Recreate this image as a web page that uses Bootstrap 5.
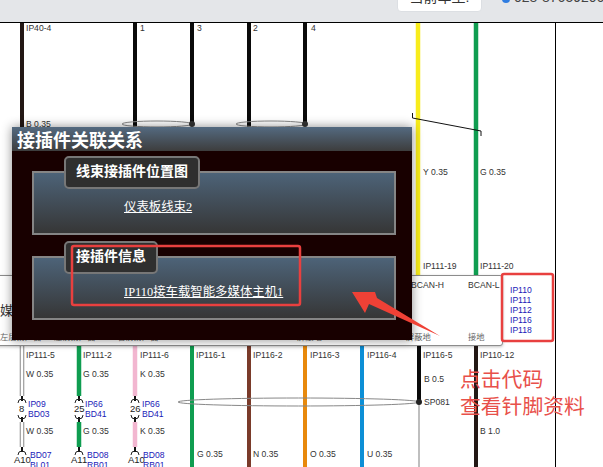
<!DOCTYPE html>
<html lang="zh-CN">
<head>
  <meta charset="UTF-8" />
  <meta name="viewport" content="width=device-width, initial-scale=1.0"/>
  <title>接插件关联关系</title>
  <link href="https://cdn.jsdelivr.net/npm/bootstrap@5.3.2/dist/css/bootstrap.min.css" rel="stylesheet" />
  <style>
    html, body { height: 467px; overflow: hidden; }
    body { background-color: #fff; font-family: "Liberation Sans", "Noto Sans CJK SC", sans-serif; }
    .topbar { height: 23px; background-color: #e4e6e9; border-bottom: 1px solid #000; }
    .car-btn { width: 85px; height: 24px; margin-right: 20px; margin-bottom: 10px; background: #fff; border: 1px solid #dcdfe3; border-radius: 4px; font-size: 14px; line-height: 16px; color: #333; text-align: center; }
    .phone { width: 101px; height: 18px; margin-bottom: 16px; font-size: 14px; line-height: 18px; color: #444; white-space: nowrap; }
    .phone-dot { flex: none; width: 8px; height: 8px; border-radius: 50%; background: #2f7de1; margin-right: 4px; margin-top: 4px; }
    .canvas { position: relative; height: 444px; overflow: hidden; }
    .diagram, .notes { position: absolute; left: 0; top: 0; }
    .notes { z-index: 5; }
    .diagram text, .panel { font-size: 8.6px; fill: #333; color: #333; }
    .diagram text.lnk { fill: #1a1ab8; }
    .diagram text.sm { font-size: 9.5px; fill: #222; }
    .notes text { font-size: 20.8px; fill: #e8504a; font-family: "Noto Sans CJK SC", sans-serif; }
    .panel { position: absolute; left: -6px; top: 252px; width: 509px; height: 71px; background: #fff; border: 1px solid #8c8c8c; border-radius: 3px; box-shadow: 0 1px 3px rgba(0,0,0,.25); z-index: 2; }
    .panel span { position: absolute; white-space: nowrap; }
    .p-top { top: 3px; }
    .p-bottom { top: 55px; color: #666; font-size: 8.3px; }
    .p-mid { left: 5px; top: 25px; font-size: 13px; }
    .code-list { position: absolute; left: 510px; top: 262px; z-index: 2; font-size: 8.6px; line-height: 10px; color: #1a1ab8; }
    .relation { position: absolute; left: 12px; top: 104px; width: 400px; height: 213px; background: #180000; box-shadow: 0 0 10px rgba(0,0,0,.45); z-index: 3; color: #fff; font-family: "Liberation Serif", "Noto Sans CJK SC", serif; }
    .relation-head { height: 24px; padding-left: 5px; font-family: "Liberation Sans", "Noto Sans CJK SC", sans-serif; font-size: 18px; font-weight: 700; line-height: 28px; background: linear-gradient(#546a80, #3d3d3d); }
    .group { height: 64px; margin: 0 16px 21px 20px; border: 2px solid #858585; background: linear-gradient(#4d6378, #363636); }
    .group-first { margin-top: 20px; }
    .group-title { width: fit-content; height: 33px; margin: -17px 0 0 30px; padding: 0 10px; border: 2px solid #777; border-radius: 5px; background: #2f2f2f; font-family: "Liberation Sans", "Noto Sans CJK SC", sans-serif; font-size: 14px; font-weight: 700; line-height: 27px; }
    .group-link { margin: 10px 0 0 90px; font-size: 12.4px; line-height: 16px; }
    .group-link a { color: #fff; }
  </style>
</head>
<body>
<div class="topbar d-flex justify-content-end align-items-end">
  <div class="car-btn overflow-hidden">当前车型:</div>
  <div class="phone d-flex align-items-center"><span class="phone-dot"></span>028-87659206</div>
</div>

<div class="canvas">
  <!-- wiring diagram, y here = screenshot y - 23 -->
  <svg class="diagram" width="603" height="444" viewBox="0 23 603 444" fill="none">
    <g stroke-width="4">
      <path d="M22 23V130" stroke="#231815"/>
      <path d="M135 23V130M192 23V124M249 23V130M305 23V124" stroke="#0a0a0a"/>
      <path d="M418 23V280" stroke="#f8ec1c" stroke-width="4.5"/>
      <path d="M476 23V280" stroke="#0f9d50" stroke-width="4.5"/>
      <path d="M79 346V396M79 422V447" stroke="#0f9d50" stroke-width="4.5"/>
      <path d="M135 346V396M135 422V447" stroke="#f2b6d0" stroke-width="4.5"/>
      <path d="M192 346V467" stroke="#0f9d50"/>
      <path d="M249 346V467" stroke="#7a3b2a"/>
      <path d="M305 346V467" stroke="#e8890c"/>
      <path d="M362 346V467" stroke="#0d8fd6"/>
      <path d="M419 346V402" stroke="#0a0a0a"/>
      <path d="M476 346V467" stroke="#231815"/>
      <path d="M79 396V401M79 417V422M135 396V401M135 417V422M22 396V401M22 417V422M79 447V452M135 447V452M22 447V452" stroke="#111" stroke-width="2"/>
    </g>
    <path d="M22 346V396M22 422V447" stroke="#888" stroke-width="4.5"/>
    <path d="M22 346V396M22 422V447" stroke="#fff" stroke-width="2.5"/>
    <path d="M419 403V467" stroke="#aaa" stroke-width="1.5"/>
    <path d="M555.5 23V467" stroke="#000"/>
    <path d="M412.500 113V118L481 131V136" stroke="#111"/>
    <g stroke="#888">
      <ellipse cx="157" cy="124" rx="35" ry="3"/>
      <ellipse cx="271" cy="124" rx="35" ry="3"/>
      <ellipse cx="298.500" cy="402" rx="120.500" ry="4"/>
    </g>
    <circle cx="192" cy="124" r="3" fill="#333"/>
    <circle cx="305" cy="124" r="3" fill="#333"/>
    <circle cx="419" cy="402" r="3" fill="#222"/>
    <g stroke="#222">
      <path d="M18 403A4 4 0 0 1 26 403M18 415A4 4 0 0 0 26 415"/>
      <path d="M75 403A4 4 0 0 1 83 403M75 415A4 4 0 0 0 83 415"/>
      <path d="M131 403A4 4 0 0 1 139 403M131 415A4 4 0 0 0 139 415"/>
      <path d="M18 455A4 4 0 0 1 26 455M75 455A4 4 0 0 1 83 455M131 455A4 4 0 0 1 139 455"/>
    </g>
    <g>
      <text x="26" y="31">IP40-4</text><text x="140" y="31">1</text><text x="197" y="31">3</text><text x="253" y="31">2</text><text x="311" y="31">4</text>
      <text x="26" y="127">B 0.35</text>
      <text x="423" y="175">Y 0.35</text><text x="480" y="175">G 0.35</text>
      <text x="423" y="269">IP111-19</text><text x="480" y="269">IP111-20</text>
      <text x="26" y="358">IP111-5</text><text x="83" y="358">IP111-2</text><text x="140" y="358">IP111-6</text>
      <text x="196" y="358">IP116-1</text><text x="253" y="358">IP116-2</text><text x="310" y="358">IP116-3</text><text x="367" y="358">IP116-4</text><text x="423" y="358">IP116-5</text><text x="480" y="358">IP110-12</text>
      <text x="26" y="377">W 0.35</text><text x="83" y="377">G 0.35</text><text x="140" y="377">K 0.35</text>
      <text x="26" y="434">W 0.35</text><text x="83" y="434">G 0.35</text><text x="140" y="434">K 0.35</text>
      <text x="197" y="457">G 0.35</text><text x="253" y="457">N 0.35</text><text x="310" y="457">O 0.35</text><text x="367" y="457">U 0.35</text>
      <text x="424" y="382">B 0.5</text><text x="424" y="405">SP081</text><text x="480" y="434">B 1.0</text>
      <text class="sm" x="19" y="412">8</text><text class="sm" x="74" y="412">25</text><text class="sm" x="130" y="412">26</text>
      <text class="sm" x="14" y="463">A10</text><text class="sm" x="71" y="463">A11</text><text class="sm" x="128" y="463">A10</text>
      <text class="lnk" x="28" y="407">IP09</text><text class="lnk" x="28" y="417">BD03</text>
      <text class="lnk" x="85" y="407">IP66</text><text class="lnk" x="85" y="417">BD41</text>
      <text class="lnk" x="142" y="407">IP66</text><text class="lnk" x="142" y="417">BD41</text>
      <text class="lnk" x="30" y="458">BD07</text><text class="lnk" x="30" y="468">BL01</text>
      <text class="lnk" x="87" y="458">BD08</text><text class="lnk" x="87" y="468">RB01</text>
      <text class="lnk" x="143" y="458">BD08</text><text class="lnk" x="143" y="468">RB01</text>
    </g>
  </svg>

  <!-- popup behind the dialog -->
  <div class="panel">
    <span class="p-mid">媒</span>
    <span class="p-top" style="left:416px">BCAN-H</span>
    <span class="p-top" style="left:473px">BCAN-L</span>
    <span class="p-bottom" style="left:5px">左后扬声器</span>
    <span class="p-bottom" style="left:59px">左前扬声器</span>
    <span class="p-bottom" style="left:122px">右前扬声器</span>
    <span class="p-bottom" style="left:302px">屏蔽地</span>
    <span class="p-bottom" style="left:411px">屏蔽地</span>
    <span class="p-bottom" style="left:473px">接地</span>
  </div>
  <div class="code-list">IP110<br>IP111<br>IP112<br>IP116<br>IP118</div>

  <div class="relation">
    <div class="relation-head">接插件关联关系</div>
    <div class="group group-first">
      <div class="group-title">线束接插件位置图</div>
      <div class="group-link"><a href="#">仪表板线束2</a></div>
    </div>
    <div class="group">
      <div class="group-title">接插件信息</div>
      <div class="group-link"><a href="#">IP110接车载智能多媒体主机1</a></div>
    </div>
  </div>

  <!-- red annotations on top of everything -->
  <svg class="notes" width="603" height="444" viewBox="0 23 603 444" fill="none">
    <rect x="72" y="246" width="228" height="59" rx="2" stroke="#e8403f" stroke-width="2.500"/>
    <rect x="502" y="274" width="51" height="67" rx="2" stroke="#e8403f" stroke-width="2.500"/>
    <polygon points="440,336 377,298 375,292 352,292 365,313 369,304" fill="#ef4136"/>
    <text x="460" y="387">点击代码</text>
    <text x="460" y="414">查看针脚资料</text>
  </svg>
</div>

<script src="https://cdn.jsdelivr.net/npm/bootstrap@5.3.2/dist/js/bootstrap.bundle.min.js"></script>
</body>
</html>
